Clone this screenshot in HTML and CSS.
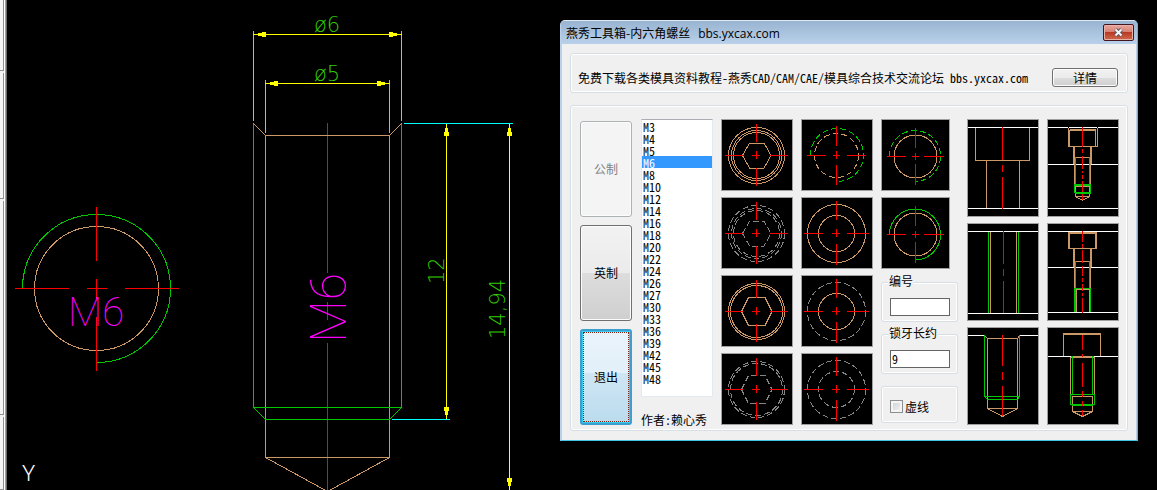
FILE: index.html
```html
<!DOCTYPE html>
<html lang="zh-CN">
<head>
<meta charset="utf-8">
<title>燕秀工具箱-内六角螺丝</title>
<link rel="stylesheet" href="styles.css">
</head>
<body>
<aside class="rail"><i class="rail-a"></i><i class="rail-b"></i><i class="rail-c"></i><i class="rail-d"></i></aside>
<main class="canvas">
<svg class="drawing" width="1150" height="490" viewBox="7 0 1150 490" role="img" aria-label="M6">
  <circle class="brown" cx="96.5" cy="288.5" r="62"/>
  <path class="green" d="M22.5 288.5A74 74 0 1 1 96.5 362.5"/>
  <path class="red" d="M96.5 207v54M96.5 279v20M96.5 317v54M15 288.5h54M87 288.5h20M125 288.5h54"/>
  <text class="mark" x="68" y="326">M6</text>
  <text class="axis" x="22" y="481">Y</text>

  <path class="center" d="M327.5 123v150M327.5 302v18M327.5 343v147"/>
  <path class="cyan" d="M253.5 31v90M401.5 31v90M265.5 80v53M389.5 80v53M404 123.5h109M392 419.5h58"/>
  <path class="brown" d="M265.5 135.5h124V457.5h-124zM253.5 123.5l12 12M401.5 123.5l-12 12M265.5 457.5l62 34l62 -34"/>
  <path class="green" d="M253.5 123.5V407.5h148V123.5M253.5 407.5l12 12h124l12 -12"/>
  <path class="yellow" d="M253 34.5h149M265 83.5h125M446.5 124v295M509.5 124v366"/>
  <path class="arrow" d="M254 34.5l12 -3v6zM401 34.5l-12 -3v6zM266 83.5l12 -3v6zM389 83.5l-12 -3v6zM446.500 124l-3 12h6zM446.500 419l-3 -12h6zM509.500 124l-3 12h6zM509.500 490l-3 -12h6z"/>
  <text class="dim" x="314" y="32">ø6</text>
  <text class="dim" x="314" y="81">ø5</text>
  <text class="dim" transform="translate(444 284) rotate(-90)">12</text>
  <text class="dim" transform="translate(505 339) rotate(-90)">14,94</text>
  <text class="mark mark-large" transform="translate(346 343) rotate(-90)">M6</text>
</svg>

<section class="dialog" role="dialog" aria-labelledby="title">
  <header class="titlebar">
    <h1 id="title">燕秀工具箱-内六角螺丝<span class="site">bbs.yxcax.com</span></h1>
    <button class="close" aria-label="关闭"><svg width="11" height="9" viewBox="0 0 11 9"><path d="M2.500 1.500L8.500 7.500M8.500 1.500L2.500 7.500" stroke="#5a5a68" stroke-width="4"/><path d="M2.500 1.500L8.500 7.500M8.500 1.500L2.500 7.500" stroke="#f4f4f4" stroke-width="2"/></svg></button>
  </header>
  <div class="client">
    <div class="group banner">
      <p>免费下载各类模具资料教程-燕秀CAD/CAM/CAE/模具综合技术交流论坛 bbs.yxcax.com</p>
      <button class="btn details">详情</button>
    </div>
    <div class="group work">
      <div class="modes">
        <button class="btn tall" disabled>公制</button>
        <button class="btn tall">英制</button>
        <button class="btn tall focused">退出</button>
      </div>
      <div class="sizes">
        <select class="list" size="22" aria-label="规格">
          <option>M3</option><option>M4</option><option>M5</option><option selected>M6</option><option>M8</option><option>M10</option><option>M12</option><option>M14</option><option>M16</option><option>M18</option><option>M20</option><option>M22</option><option>M24</option><option>M26</option><option>M27</option><option>M30</option><option>M33</option><option>M36</option><option>M39</option><option>M42</option><option>M45</option><option>M48</option>
        </select>
        <span class="author">作者:赖心秀</span>
      </div>
      <div class="tiles">
        <button class="tile" aria-label="俯视 1"><svg viewBox="0 0 70 70"><g class="brown"><circle cx="34.500" cy="35.500" r="28"/><circle cx="34.500" cy="35.500" r="25"/><circle cx="34.500" cy="35.500" r="23"/><path d="M20.500 35.500l7 -12.500h14.500l7 12.500l-7 12.500h-14.500z"/></g><path class="red" d="M34.500 4v18M34.500 31v8M34.500 48v18M3 35.500h18M30 35.500h8M48 35.500h18"/></svg></button>
        <button class="tile" aria-label="俯视 2"><svg viewBox="0 0 70 70"><g class="gray dash"><circle cx="34.500" cy="35.500" r="28"/><circle cx="34.500" cy="35.500" r="25"/><circle cx="34.500" cy="35.500" r="23"/><path d="M20.500 35.500l7 -12.500h14.500l7 12.500l-7 12.500h-14.500z"/></g><path class="red" d="M34.500 4v18M34.500 31v8M34.500 48v18M3 35.500h18M30 35.500h8M48 35.500h18"/></svg></button>
        <button class="tile" aria-label="俯视 3"><svg viewBox="0 0 70 70"><g class="brown"><circle cx="34.500" cy="35.500" r="28"/><circle cx="34.500" cy="35.500" r="26"/><path d="M19.500 35.500l7 -14h16.500l7 14l-7 14h-16.500z"/></g><path class="red" d="M34.500 4v18M34.500 31v8M34.500 48v18M3 35.500h18M30 35.500h8M48 35.500h18"/></svg></button>
        <button class="tile" aria-label="俯视 4"><svg viewBox="0 0 70 70"><g class="gray dash"><circle cx="34.500" cy="35.500" r="28"/><circle cx="34.500" cy="35.500" r="26"/><path d="M19.500 35.500l7 -14h16.500l7 14l-7 14h-16.500z"/></g><path class="red" d="M34.500 4v18M34.500 31v8M34.500 48v18M3 35.500h18M30 35.500h8M48 35.500h18"/></svg></button>
      </div>
      <div class="tiles">
        <button class="tile" aria-label="螺纹孔 1"><svg viewBox="0 0 70 70"><circle class="brown dash" cx="34.500" cy="35.500" r="22"/><path class="green dash" d="M8.500 35.500A26.500 26.500 0 1 1 35 61.500"/><path class="red" d="M34.500 6v20M34.500 31v8M34.500 45v20M5 35.500h19M31 35.500h7M45 35.500h19"/></svg></button>
        <button class="tile" aria-label="通孔 1"><svg viewBox="0 0 70 70"><g class="brown"><circle cx="34.500" cy="35.500" r="29"/><circle cx="34.500" cy="35.500" r="18"/></g><path class="red" d="M34.500 3v19M34.500 31v8M34.500 46v21M2 35.500h19M30 35.500h8M45 35.500h22"/></svg></button>
        <button class="tile" aria-label="通孔 2"><svg viewBox="0 0 70 70"><circle class="gray dash" cx="34.500" cy="35.500" r="29"/><circle class="brown" cx="34.500" cy="35.500" r="18"/><path class="red" d="M34.500 3v19M34.500 31v8M34.500 46v21M2 35.500h19M30 35.500h8M45 35.500h22"/></svg></button>
        <button class="tile" aria-label="通孔 3"><svg viewBox="0 0 70 70"><g class="gray dash"><circle cx="34.500" cy="35.500" r="29"/><circle cx="34.500" cy="35.500" r="18"/></g><path class="red" d="M34.500 3v19M34.500 31v8M34.500 46v21M2 35.500h19M30 35.500h8M45 35.500h22"/></svg></button>
      </div>
      <div class="options">
        <button class="tile narrow" aria-label="螺纹孔 2"><svg viewBox="0 0 67 70"><circle class="brown" cx="33.500" cy="36.500" r="21.500"/><path class="green dash" d="M7.500 36.500A25.500 25.500 0 1 1 33.500 61.500"/><path class="red" d="M33.500 8v20M33.500 33v7M33.500 44v21M5 36.500h19M30 36.500h7M42 36.500h20"/></svg></button>
        <button class="tile narrow" aria-label="螺纹孔 3"><svg viewBox="0 0 67 70"><circle class="brown" cx="33.500" cy="36.500" r="21.500"/><path class="green" d="M7.500 36.500A25.500 25.500 0 1 1 33.500 62"/><path class="red" d="M33.500 8v20M33.500 33v7M33.500 44v21M5 36.500h19M30 36.500h7M42 36.500h20"/></svg></button>
        <div class="group field first"><label for="num">编号</label><input id="num" type="text"></div>
        <div class="group field"><label for="len">锁牙长约</label><input id="len" type="text" value="9"></div>
        <div class="group check"><input id="dash" type="checkbox"><label for="dash">虚线</label></div>
      </div>
      <div class="tiles sides">
        <button class="tile" aria-label="沉头孔"><svg viewBox="0 0 70 96"><path class="white" d="M0 7.500h70M0 88.500h70"/><path class="brown" d="M7.500 8V40.500h54V8M18.500 41V88M51.500 41V88"/><path class="red" d="M34.500 7v33M34.500 45v7M34.500 57v32"/></svg></button>
        <button class="tile" aria-label="螺纹通孔"><svg viewBox="0 0 70 96"><path class="white" d="M0 7.500h70M0 89.500h70"/><path class="brown" d="M22.500 8V89M48.500 8V89"/><path class="green" d="M20.500 8V89M50.500 8V89"/><path class="red" d="M35.500 7v33M35.500 45v7M35.500 57v32"/></svg></button>
        <button class="tile" aria-label="螺纹盲孔"><svg viewBox="0 0 70 96"><path class="white" d="M0 7.500h16M52 7.500h18"/><path class="brown" d="M16.500 7.500l3 3h30l2 -3M19.500 10V80.500h30V10M19.500 80.500l15 8l15 -8"/><path class="green" d="M16.500 7V68.500h35V7M16.500 68.500l3 3h30l2 -3"/><path class="red" d="M34.500 7v31M34.500 44v8M34.500 58v30"/></svg></button>
      </div>
      <div class="tiles sides">
        <button class="tile" aria-label="螺钉装配 1"><svg viewBox="0 0 70 96"><path class="white" d="M0 7.500h20M50 7.500h20M21 7.500h28M0 44.500h70M0 88.500h70"/><path class="brown" d="M20.500 8V26.500h29V8M21.500 10V26M47.500 10V26M22 9.500h26M22 10.500h26M25.500 27V44M26.500 27V65M42.500 27V65M43.500 27V44M27 37.500h15M27 66.500h15M27.500 66V76.500h14V66M27.500 76.500l7 4l7 -4"/><path class="green" d="M27.500 37V65M41.500 37V65M26.500 64.500h16v8h-16zM26 65.500h17M27 73.500h16"/><path class="red" d="M34.500 7v20M34.500 29v4M34.500 36v13M34.500 51v2M34.500 55v4M34.500 61v11M34.500 74v6"/></svg></button>
        <button class="tile" aria-label="螺钉装配 2"><svg viewBox="0 0 70 96"><path class="white" d="M0 7.500h70M0 43.500h70M0 88.500h70"/><path class="brown" d="M20.500 8V24.500h28V8M21.500 9V24M47.500 9V24M21 9.500h27M21 8.500h27M25.500 25V43M26.500 25V64M42.500 25V64M43.500 25V43M27 37.500h15M28 65.500h14M28.500 66V88M41.500 66V88"/><path class="green" d="M27.500 37V64M41.500 37V64M26.500 88V64.500h16V88M27.500 65V88"/><path class="red" d="M34.500 7v11M34.500 20v4M34.500 26v13M34.500 42v10M34.500 54v4M34.500 60v7M34.500 69v3M34.500 74v15"/></svg></button>
        <button class="tile" aria-label="螺钉装配 3"><svg viewBox="0 0 70 96"><path class="white" d="M0 28.500h24M44 28.500h26"/><path class="brown" d="M15.500 28V5.500h37V28M16 6.500h36M24 28.500h20M22.500 67V29.500h24V67M24.500 68.500h20V83.500h-20zM24.500 83.500l10 5l10 -5"/><path class="green" d="M24.500 29V67M44.500 29V67M22.500 66.500h24v10h-24zM24 77.500h21M23 28.500h2M44 28.500h2"/><path class="red" d="M34.500 7v15M34.500 26v3M34.500 35v24M34.500 63v6M34.500 73v5M34.500 82v6"/></svg></button>
      </div>
    </div>
  </div>
</section>
</main>
</body>
</html>
```

FILE: styles.css
```css
* { box-sizing: border-box; }
body {
  margin: 0;
  min-height: 100vh;
  display: flex;
  background: #000;
  color: #000;
  font: 12px/12px "Noto Sans Mono CJK SC", "Noto Sans CJK SC", sans-serif;
  overflow: hidden;
}
button, input, select { font: inherit; color: inherit; margin: 0; }

/* docked toolbar edge */
.rail {
  flex: none;
  width: 7px;
  height: 100vh;
  display: flex;
  flex-direction: column;
  gap: 2px;
  background: linear-gradient(to right, #f0f0f0 4px, #fff 4px 5px, #a0a0a0 5px 6px, #696969 6px);
}
.rail i { width: 4px; background: #f4f4f4; border-right: 1px solid #909090; border-bottom: 1px solid #909090; }
.rail-a { height: 71px; }
.rail-b { height: 126px; }
.rail-c { height: 214px; }
.rail-d { flex: 1; }

.canvas { position: relative; flex: 1; min-width: 0; overflow: hidden; }
.drawing { display: block; }
svg { fill: none; shape-rendering: crispEdges; }
.brown { stroke: #cc9966; }
.green { stroke: #00c800; }
.red { stroke: #f00; }
.center { stroke: #e01010; }
.cyan { stroke: #0ff; }
.yellow { stroke: #ff0; }
.white { stroke: #fff; }
.gray { stroke: #858585; }
.dash { stroke-dasharray: 6 3; }
.arrow { fill: #ff0; }
.dim { fill: #3c0; font: 200 21px "DejaVu Sans", sans-serif; }
.mark { fill: #f0f; font: 100 40px Roboto, sans-serif; }
.mark-large { font-size: 50px; }
.axis { fill: #fff; font: 300 22px Roboto, sans-serif; }

.dialog {
  position: absolute;
  left: 553px;
  top: 20px;
  width: 578px;
  border: 1px solid #43c3e8;
  border-top-color: #dfe9f4;
  border-left-color: #b9d1ea;
  border-radius: 5px 5px 0 0;
  background: #b9d1ea;
  overflow: hidden;
}
.titlebar {
  height: 23px;
  display: flex;
  justify-content: space-between;
  align-items: flex-start;
  padding: 3px 3px 0 5px;
  background: linear-gradient(#99b4d1, #b9d1ea);
}
h1 { margin: 0; font: 12px/18px "Noto Sans CJK SC", sans-serif; white-space: nowrap; }
.site { margin-left: 8px; font-size: 12px; font-family: "Open Sans", sans-serif; }
.close {
  width: 31px;
  height: 17px;
  display: grid;
  place-items: center;
  padding: 0;
  border: 1px solid #431422;
  border-radius: 2px;
  background: linear-gradient(#e8a79d, #d98273 45%, #b93a24 50%, #cf6a4c);
  box-shadow: inset 0 0 0 1px #e9b2a6;
}
.close svg { shape-rendering: auto; }
.client {
  margin: 0 1px;
  padding: 9px 8px 9px 8px;
  background: #f0f0f0;
  display: flex;
  flex-direction: column;
  gap: 12px;
}
.group { border: 1px solid #d5dfe5; border-radius: 3px; box-shadow: inset 0 0 0 1px #fff; }
.banner { height: 40px; display: flex; align-items: center; justify-content: space-between; padding: 9px 9px 0 7px; }
.banner p { margin: 0; white-space: nowrap; }
.btn {
  padding: 0;
  border: 1px solid #707070;
  border-radius: 3px;
  background: linear-gradient(#f2f2f2, #ebebeb 50%, #ddd 50%, #cfcfcf);
  box-shadow: inset 0 0 0 1px #fcfcfc;
}
.details { width: 66px; height: 19px; }
.work { display: flex; padding: 13px 8px 4px 9px; }
.modes { flex: none; width: 52px; display: grid; grid-auto-rows: 96px; gap: 8px; padding-top: 2px; margin-right: 9px; }
.tall:disabled { border-color: #adb2b5; background: #f4f4f4; color: #838383; }
.tall.focused {
  border: 2px solid #3c9fd0;
  background: linear-gradient(#eaf3fb, #e2f0f9 46%, #cfe6f3 46%, #bbdcee);
  box-shadow: inset 0 0 0 1px #35cdf2;
  outline: 1px dotted #802010;
  outline-offset: -4px;
}
.sizes { flex: none; width: 72px; margin-right: 8px; display: flex; flex-direction: column; }
.list {
  width: 72px;
  height: 278px;
  padding: 0;
  border: 1px solid #e3e9ef;
  border-top-color: #abadb3;
  border-radius: 0;
  background: #fff;
  overflow: hidden;
  outline: 0;
}
.list option { display: flex; align-items: center; height: 12px; min-height: 0; padding: 0 1px; }
.list option:checked { background: linear-gradient(#39f, #39f); -webkit-text-fill-color: #fff; }
.author { margin-top: 17px; white-space: nowrap; }
.tiles { flex: none; display: grid; grid-auto-rows: 72px; gap: 6px; width: 72px; margin-right: 8px; align-content: start; }
.sides { grid-auto-rows: 98px; }
.sides:last-child { margin-right: 0; }
.tile { display: block; width: 72px; padding: 0; border: 1px solid #a0a0a0; background: #000; }
.tile svg { display: block; width: 100%; height: 100%; }
.narrow { width: 69px; height: 72px; margin-bottom: 6px; }
.options { flex: 1; min-width: 77px; margin-right: 9px; display: flex; flex-direction: column; }
.field { height: 40px; margin: 0 0 12px; padding: 0 8px; display: flex; flex-direction: column; }
.first { margin-top: 7px; }
.field label { align-self: flex-start; margin-top: -8px; margin-left: -2px; padding: 0 1px; background: #f0f0f0; white-space: nowrap; }
.field input { width: 60px; height: 18px; margin-top: 11px; padding: 0 1px 2px; border: 1px solid #646464; background: #fff; border-radius: 0; }
.check { height: 37px; display: flex; align-items: center; gap: 2px; padding: 4px 8px 0; }
.check input {
  appearance: none;
  width: 13px;
  height: 13px;
  border: 1px solid #8e8f8f;
  background: linear-gradient(135deg, #cbcfd5, #f6f6f6);
  box-shadow: inset 0 0 0 2px #f4f4f4;
}
```
